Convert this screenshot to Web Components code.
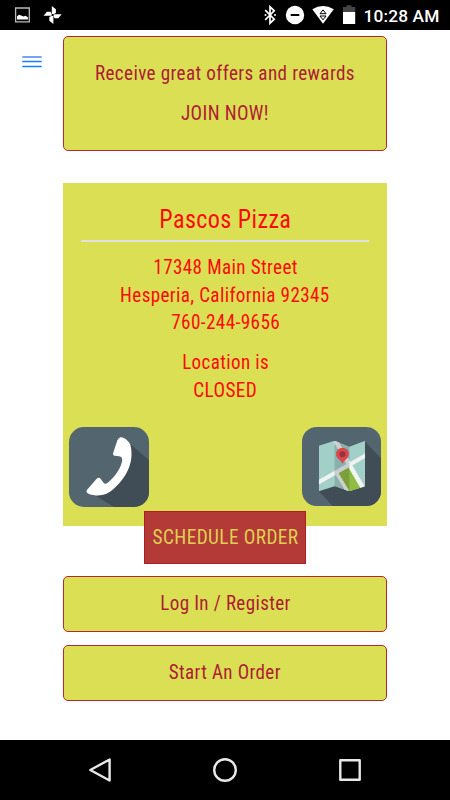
<!DOCTYPE html>
<html lang="en">
<head>
<meta charset="utf-8">
<title>Pascos Pizza</title>
<style>
html,body{margin:0;background:#fff}
body{width:450px;height:800px;overflow:hidden;font-family:"Roboto Condensed",Roboto,"Liberation Sans",sans-serif}
</style>
</head>
<body>
<pizza-app></pizza-app>
<script>
const define = (name, html, ready) => customElements.define(name, class extends HTMLElement {
  connectedCallback() {
    if (this.shadowRoot) return;
    const t = document.createElement('template');
    t.innerHTML = html;
    this.attachShadow({ mode: 'open' }).append(t.content.cloneNode(true));
    if (ready) ready(this);
  }
});

/* One centred line of condensed text, set to the width given by "w". */
define('fit-text', `
<style>
:host{display:flex;justify-content:center;white-space:nowrap;font-size:20px;line-height:27.5px;letter-spacing:.4px}
:host([title-line]){font-size:25px;line-height:34px}
span{display:inline-block;flex:none;margin-right:-.6px;transform-origin:center}
</style><span><slot></slot></span>`, el => {
  const s = el.shadowRoot.querySelector('span');
  s.style.transform = 'scaleX(' + (+el.getAttribute('w') / s.getBoundingClientRect().width) + ')';
});

define('status-bar', `
<style>
:host{display:flex;box-sizing:border-box;height:30px;background:#000;color:#fff;align-items:center;justify-content:space-between;padding:0 10.500px 0 14px}
div{display:flex;align-items:center}
svg{display:block}
.sys{margin-right:1px}
b{font:500 17.3px/30px Roboto,sans-serif;letter-spacing:.15px;padding-top:1px}
</style>
<div><svg width="50" height="30" viewBox="14 0 50 30"><path d="M15.6 8h13.7v13.9H15.6z" fill="none" stroke="#bbb" stroke-width="1.3"/><path d="M17 19.6v-3.4l2.2-1.5 1.8.8 2.5 1 2-.8 2.4 1.5v2.4z" fill="#fff"/>
<g fill="#fff" transform="translate(52.6 15)"><path d="M-.8-.8V-9L3.300-5.700V-2L.8-.8z"/><path d="M-.8-.8V-9L3.300-5.700V-2L.8-.8z" transform="rotate(90)"/><path d="M-.8-.8V-9L3.300-5.700V-2L.8-.8z" transform="rotate(180)"/><path d="M-.8-.8V-9L3.300-5.700V-2L.8-.8z" transform="rotate(270)"/><circle r="1" fill="#000"/></g></svg></div>
<div><svg class="sys" width="102" height="30" viewBox="261 0 102 30"><path d="M265.200 10.200l9 9-4.200 4V6.800l4.200 4-9 9" fill="none" stroke="#fff" stroke-width="1.700"/><circle cx="265.500" cy="15" r="1" fill="#fff"/><circle cx="275" cy="15" r="1" fill="#fff"/>
<circle cx="295" cy="15" r="9.200" fill="#fff"/><path d="M290.700 15h8.600" stroke="#000" stroke-width="2"/>
<path d="M312.300 9.300Q323 2.700 333.800 9.300L323 23.700z" fill="#fff"/><path d="M320 13.700l3-3.800 3 3.800zm0 2.300l3 3.800 3-3.800z" fill="#fff" stroke="#000" stroke-width="1"/>
<path d="M343 12V7h3.500V5.300h5V7h3.700v5z" fill="#444"/><path d="M343 12h12.200v12H343z" fill="#fff"/></svg><b>10:28 AM</b></div>`);

define('menu-button', `
<style>:host{display:block;width:20px;height:13px}svg{display:block}</style>
<svg width="20" height="13" viewBox="0 0 20 13"><path d="M.3 1H19.700" stroke="#76a5f8" stroke-width="2"/><path d="M.3 5.500H19.700M.3 10.500H19.700" stroke="#147efb" stroke-width="1.400"/></svg>`);

define('outline-button', `
<style>
:host{display:flex;flex-direction:column;justify-content:center;box-sizing:border-box;height:56px;border:1px solid #b2292e;border-radius:5px;background:#dbdf53;color:#ae1c35;padding-bottom:1px}
</style><slot></slot>`);

define('tile-icon', `
<style>:host{display:block;width:80px;height:80px}:host([kind=map]){width:79px;height:79px}svg{display:block;width:100%;height:100%}</style><svg viewBox="0 0 80 80"></svg>`, el => {
  const phone = el.getAttribute('kind') === 'phone';
  el.shadowRoot.querySelector('svg').innerHTML = `<defs><clipPath id="c"><rect width="80" height="80" rx="15"/></clipPath></defs><g clip-path="url(#c)"><path fill="#53656f" d="M0 0h80v80H0z"/>` + (phone ?
  `<path fill="#414d56" d="M60 16L80 33v47H45L27 69L44 57L52 45L54 31L50 29z"/><path fill="#fff" d="M51.500 10.300C54 9.400 60.500 14 61.600 18.500C65.500 36 57 51 44 62.500C37.500 68.300 29.500 69.900 20 66.900C17.300 66 16.800 64.500 18.300 62.500L27.500 52Q29.700 49.500 32 52.300L34.500 55.700Q36 57.800 39 55.500C46 49.500 51.500 42 53 34.500Q54 29.500 50 29.200L45.500 28.700Q43.300 28 44.300 25.500L48.300 13.500Q49.300 11 51.500 10.300z"/>` :
  `<path fill="#414d56" d="M63 14L80 32v48H31L17 65z"/><clipPath id="m"><path d="M17 19l16-5 15 6 16-6v46l-16 5-15-5-16 5z"/></clipPath><g clip-path="url(#m)"><path fill="#a3cfc9" d="M17 14h47v52H17z"/><path fill="#8fbd44" d="M35 47l14-7 14 22-15 4h-4z"/><path d="M34 14l14 24 15 26" fill="none" stroke="#f1f4f3" stroke-width="4.500"/><path d="M34 45l12 20" stroke="#f1f4f3" stroke-width="3.500"/><path d="M15 57L66 28" stroke="#eef3f2" stroke-width="4"/><path fill="#000" opacity=".15" d="M33 14l15 6v45l-15-5z"/></g><path fill="#d9474d" d="M41 37.500c-1-4-6.500-5.500-6.500-10a6.500 6.500 0 0 1 13 0c0 4.500-5.500 6-6.500 10z"/><circle cx="41" cy="27.500" r="3" fill="#99333a"/>`) + '</g>';
});

define('store-card', `
<style>
:host{display:flex;flex-direction:column;box-sizing:border-box;height:343px;background:#dbdf53;color:#fb0a08;padding:20px 6px 19px}
hr{border:0;height:1.500px;background:#e0e0de;margin:3px 12px 12.800px;width:288px}
.gap{height:12.500px}
footer{display:flex;justify-content:space-between;align-items:flex-start;margin-top:auto}
tile-icon[kind=map]{margin-right:.5px}
</style>
<slot name="title"></slot><hr><slot name="address"></slot><div class="gap"></div><slot name="state"></slot>
<footer><tile-icon kind="phone"></tile-icon><tile-icon kind="map"></tile-icon></footer>`);

define('schedule-button', `
<style>
:host{display:flex;flex-direction:column;justify-content:center;box-sizing:border-box;position:relative;width:162px;height:53px;background:#b43a38;border:1px solid #b11c22;color:#dfcf50}
</style><slot></slot>`);

define('nav-bar', `
<style>
:host{display:flex;height:60px;background:#000;align-items:center;justify-content:center;gap:97px}
svg{display:block}
</style>
<svg width="28" height="28" viewBox="0 0 28 28" fill="none" stroke="#e8e8e8" stroke-width="2.400" stroke-linejoin="round"><path d="M23.600 3.500v21L4.300 14z"/></svg>
<svg width="28" height="28" viewBox="0 0 28 28" fill="none" stroke="#e8e8e8" stroke-width="2.400"><circle cx="14" cy="14" r="10.800"/></svg>
<svg width="28" height="28" viewBox="0 0 28 28" fill="none" stroke="#e8e8e8" stroke-width="2.400" stroke-linejoin="round"><path d="M4.300 4.300h19.400v19.400H4.300z"/></svg>`);

define('pizza-app', `
<style>
:host{display:flex;flex-direction:column;height:800px}
main{flex:1;display:grid;grid-template-columns:63px 324px;align-items:start}
menu-button{margin:26px 0 0 22px}
.col{display:flex;flex-direction:column;padding-top:6px}
.offer{height:115px;padding:1px 0 0}
.offer fit-text+fit-text{margin-top:12.500px}
store-card{margin-top:32px}
schedule-button{align-self:center;margin:-15px 0 12px}
.start{margin-top:13px}
</style>
<status-bar></status-bar>
<main><menu-button></menu-button>
<div class="col">
<outline-button class="offer"><fit-text w="260">Receive great offers and rewards</fit-text><fit-text w="88">JOIN NOW!</fit-text></outline-button>
<store-card>
<fit-text slot="title" title-line w="132">Pascos Pizza</fit-text>
<fit-text slot="address" w="144.5">17348 Main Street</fit-text>
<fit-text slot="address" w="209.5">Hesperia, California 92345</fit-text>
<fit-text slot="address" w="109">760-244-9656</fit-text>
<fit-text slot="state" w="87">Location is</fit-text>
<fit-text slot="state" w="64">CLOSED</fit-text>
</store-card>
<schedule-button><fit-text w="146">SCHEDULE ORDER</fit-text></schedule-button>
<outline-button><fit-text w="130.5">Log In / Register</fit-text></outline-button>
<outline-button class="start"><fit-text w="112">Start An Order</fit-text></outline-button>
</div></main>
<nav-bar></nav-bar>`);
</script>
</body>
</html>
